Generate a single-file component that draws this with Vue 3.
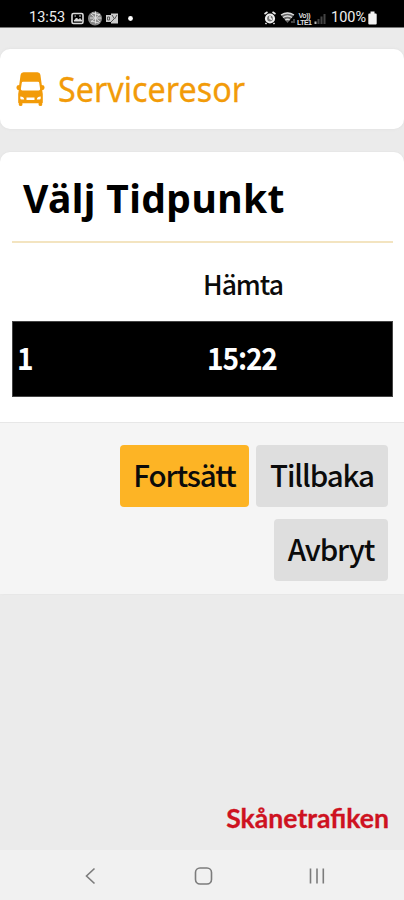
<script setup>
const choices = [{ id: 1, time: '15:22' }]
</script>

<template>
  <div class="screen">
    <header class="status">
      <span class="clock">13:53</span>
      <svg class="notices" width="66" height="16" viewBox="0 0 66 16">
        <rect x="1" y="3.5" width="11" height="10" rx="1.5" fill="none" stroke="#ddd" stroke-width="1.600" />
        <path d="M3 11l2.500-3 2 2 1.500-1.500 2 2.500zM3.500 6h1.500M8 6h2" fill="#ddd" stroke="#ddd" />
        <circle cx="24" cy="8.500" r="7" fill="#888" />
        <path d="M20 4l9 8M29 4l-9 8M24.500 1.500v12M19 8h11M21 3l8 2M20 11l8 2" fill="none" stroke="#ddd" stroke-width="1" />
        <path d="M35 5h6v7h-6zM40 3.500h7v10h-7z" fill="#ccc" />
        <path d="M36.500 7h2v3h-2zM41 5l2.500 4L46 5M40 12l3-3" fill="none" stroke="#555" />
        <circle cx="59.500" cy="8.500" r="2.400" fill="#fff" />
      </svg>
      <svg class="signals" width="66" height="16" viewBox="0 0 66 16">
        <circle cx="7" cy="8.500" r="4" fill="#777" stroke="#eee" stroke-width="2.200" />
        <path d="M1.500 4l3-2M9.500 2l3 2M3.500 13l-1 1M10.500 13l1 1M7 6V8.500l2 1" fill="none" stroke="#eee" stroke-width="1.600" />
        <path d="M18 5q6.500-5 13 0L24.500 13z" fill="#666" />
        <path d="M18 5q6.500-4 13 0M20 7.500q4.500-3 9 0M22.300 10q2.200-1.500 4.400 0" fill="none" stroke="#ddd" stroke-width="1.400" />
        <path d="M29 13v-2M31 13V9" stroke="#888" />
        <text x="35.500" y="8" class="network" textLength="12">Vo))</text>
        <text x="34" y="14.500" class="network" textLength="15">LTE1</text>
        <path d="M52.500 14v-2.500" stroke="#bbb" stroke-width="2" />
        <path d="M55.500 14V9M58.500 14V6.500M61.500 14V4" stroke="#444" stroke-width="2" />
      </svg>
      <span class="percent">100%</span>
      <svg class="battery" width="9" height="14" viewBox="0 0 9 14">
        <path d="M2.500 .500h4v2h1.300q.9 0 .9 1v9q0 1-1 1h-6.400q-1 0-1-1v-9q0-1 1-1h1.200z" fill="#f3f3f3" />
      </svg>
    </header>

    <main class="page">
      <section class="brand">
        <svg width="29" height="34" viewBox="0 0 29 34">
          <path fill-rule="evenodd" fill="#f29b09" d="M7.500 .3h14q2.500 0 2.900 2.500l1.400 10.200q2.700 0 2.700 2v1q0 2-2.300 2.200l.6 3.800V30.500q0 .5-.6.8V33q0 1-1.700 1T22.600 33v-1.700H6.400V33q0 1-1.700 1T2.800 33v-1.700q-.6-.3-.6-.8V22l.6-3.800Q.5 18 .5 16v-1q0-2 2.700-2L4.600 2.800Q5 .3 7.500.3zM7 9.800q-1 0-1.200 1l-.9 6q-.2 1.700 1.400 1.700h16.400q1.600 0 1.400-1.700l-.9-6q-.2-1-1.200-1zM4.300 24.500v1.700q0 1.200 1.200 1.200h2.700Q8 24.700 4.300 24.500zM24.700 24.500q-3.700.2-3.900 2.900h2.700q1.200 0 1.200-1.200zM10.500 25.500v2.500h8v-2.500z" />
        </svg>
        <span class="brand-name">Serviceresor</span>
      </section>

      <section class="card">
        <div class="card-body">
          <h1><span class="title">Välj Tidpunkt</span></h1>
          <div class="head"><span></span><span class="head-label">Hämta</span></div>
          <div v-for="c in choices" :key="c.id" class="choice">
            <span class="num">{{ c.id }}</span><span class="num">{{ c.time }}</span>
          </div>
        </div>
        <div class="actions">
          <button class="primary"><span>Fortsätt</span></button>
          <button class="back"><span>Tillbaka</span></button>
          <button class="cancel"><span>Avbryt</span></button>
        </div>
      </section>
      <footer><span class="operator">Skånetrafiken</span></footer>
    </main>

    <nav>
      <svg width="404" height="50" viewBox="0 0 404 50" fill="none" stroke="#7c7c7c" stroke-width="1.600">
        <path d="M94.500 18.500l-8 7.500 8 7.500" />
        <rect x="195.500" y="18" width="16" height="16" rx="4.500" />
        <path d="M310.500 18.500v15M317 18.500v15M323.300 18.500v15" />
      </svg>
    </nav>
  </div>
</template>

<style>
body { background: #ebebeb; }
</style>

<style scoped>
.screen {
  width: 404px;
  height: 900px;
  display: flex;
  flex-direction: column;
  overflow: hidden;
  background: #ebebeb;
  color: #0b0b0b;
  font-family: "Noto Sans CJK SC", "Noto Sans", sans-serif;
}
.status {
  box-sizing: border-box;
  height: 28px;
  flex: none;
  display: flex;
  align-items: center;
  padding: 10px 27px 1px 29px;
  background: #000;
  border-bottom: 1px solid #777;
  color: #eee;
  font: 14.5px/16px Roboto, sans-serif;
}
.clock { width: 42px; }
.signals { margin-left: 126px; }
.network { font: bold 7px "Liberation Sans", sans-serif; fill: #ddd; }
.percent { width: 37px; margin-left: 2px; white-space: nowrap; }
.page { flex: 1; display: flex; flex-direction: column; padding-top: 21px; }
.brand {
  box-sizing: border-box;
  height: 80px;
  display: flex;
  align-items: center;
  padding: 0 16px;
  gap: 13px;
  background: #fff;
  border-radius: 10px;
  box-shadow: 0 0 3px #ddd;
}
.brand-name {
  color: #f29b09;
  font: 34px/40px "Noto Sans", sans-serif;
  -webkit-text-stroke: .3px #f29b09;
  transform: scaleX(.95);
  transform-origin: left;
}
.card {
  height: 442px;
  margin-top: 23px;
  background: #fff;
  border-radius: 10px 10px 4px 4px;
  box-shadow: 0 0 2px #ddd;
}
.card-body { box-sizing: border-box; height: 270px; padding: 0 11px 0 12px; }
h1 {
  box-sizing: border-box;
  height: 91px;
  margin: 0;
  padding: 19px 0 0 11px;
  border-bottom: 2px solid #f3e4c0;
  color: #000;
  font: 700 39px/54px "Noto Sans", sans-serif;
  letter-spacing: .4px;
}
.head, .choice { display: grid; grid-template-columns: 191px 1fr; align-items: center; }
.head { height: 78px; padding-top: 3px; box-sizing: border-box; }
.head-label { font-size: 26.5px; font-weight: 500; line-height: 40px; letter-spacing: -1px; }
.choice {
  box-sizing: border-box;
  height: 76px;
  grid-template-columns: 190px 1fr;
  padding: 0 0 4px 4px;
  border: 1px solid #444;
  background: #000;
  color: #fff;
  font-size: 30.5px;
  font-weight: 700;
  line-height: 40px;
}
.num { letter-spacing: -1.2px; transform: scaleX(.92); transform-origin: left; }
.actions {
  box-sizing: border-box;
  height: 172px;
  display: flex;
  flex-wrap: wrap;
  justify-content: flex-end;
  align-content: flex-start;
  gap: 12px 7px;
  padding: 22px 16px 0;
  background: #f5f5f5;
  border-top: 1px solid #e7e7e7;
}
button {
  height: 62px;
  padding: 0 0 3px;
  border: 0;
  border-radius: 4px;
  background: #dedede;
  color: #0b0b0b;
  font: 500 29.5px/59px "Noto Sans CJK SC", sans-serif;
  letter-spacing: -1.1px;
  white-space: nowrap;
}
.primary { width: 129px; background: #fdb425; }
.back { width: 132px; }
.cancel { width: 114px; }
footer { margin-top: auto; padding: 0 15px 12px; text-align: right; }
.operator {
  display: inline-block;
  color: #ce1221;
  font: 700 26.6px/40px Lato, sans-serif;
  -webkit-text-stroke: .3px #ce1221;
}
nav { height: 50px; flex: none; background: #f1f1f1; }
nav svg { display: block; }
</style>
